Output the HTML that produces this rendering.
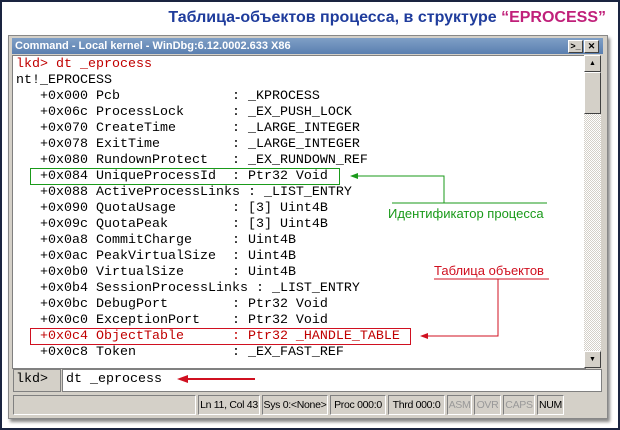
<!DOCTYPE html>
<html><head><meta charset="utf-8"><style>
body{margin:0;width:620px;height:430px;background:#fff;position:relative;overflow:hidden;font-family:"Liberation Sans",sans-serif}
.frame{position:absolute;left:0;top:0;width:616px;height:426px;border:2px solid #1a2440}
.title{position:absolute;right:14px;top:9px;font:bold 16px "Liberation Sans","DejaVu Sans",sans-serif;color:#1f3c9c}
.title span{color:#c0207a}
.win{position:absolute;left:8px;top:35px;width:598px;height:382px;background:#d4d0c8;border:1px solid #888;box-shadow:2px 3px 3px #888}
.tb{position:absolute;left:3px;top:2px;width:591px;height:16px;background:linear-gradient(#7f9fc6,#5a7fb0);color:#fff;font:bold 11px "Liberation Sans",sans-serif;line-height:16px;padding-left:3px;box-sizing:border-box}
.btn{position:absolute;top:2px;width:13px;height:11px;background:#d4d0c8;border:1px solid #fff;border-right-color:#404040;border-bottom-color:#404040;color:#000;font-size:9px;line-height:11px;text-align:center}
.out{position:absolute;left:3px;top:19px;width:572px;height:312px;background:#fff;border:1px solid #808080;overflow:hidden}
.sb{position:absolute;left:575px;top:19px;width:17px;height:313px;background:repeating-conic-gradient(#d4d0c8 0 25%,#fff 0 50%) 0 0/2px 2px}
.sbb{position:absolute;left:0;width:15px;height:15px;background:#d4d0c8;border:1px solid #fff;border-right-color:#404040;border-bottom-color:#404040;font-size:7px;text-align:center;line-height:15px}
pre{margin:0;position:absolute;left:3px;top:1px;font:13.33px/16px "Liberation Mono",monospace;color:#000}
.r{color:#c00000}
.in{position:absolute;left:4px;top:333px;width:589px;height:23px}
.pr{position:absolute;left:0;top:0;width:48px;border:1px solid #808080;font:13.33px/20px "Liberation Mono",monospace;padding-left:2px;box-sizing:border-box;height:23px}
.ed{position:absolute;left:49px;top:0;width:540px;height:23px;background:#fff;border:1px solid #808080;box-sizing:border-box;font:13.33px/20px "Liberation Mono",monospace;padding-left:3px}
.st{position:absolute;top:359px;height:20px;border:1px solid #808080;border-right-color:#fff;border-bottom-color:#fff;font:10.5px/18px "Liberation Sans",sans-serif;text-align:center;box-sizing:border-box;color:#000;white-space:nowrap;overflow:hidden;letter-spacing:-0.3px}
.g{color:#999}
</style></head><body>
<div class="frame"></div>
<div class="title">Таблица-объектов процесса, в структуре <span>“EPROCESS”</span></div>
<div class="win">
<div class="tb">Command - Local kernel - WinDbg:6.12.0002.633 X86
<div class="btn" style="left:556px">&gt;_</div><div class="btn" style="left:572px">✕</div></div>
<div class="out"><pre><span class="r">lkd&gt; dt _eprocess</span>
nt!_EPROCESS
   +0x000 Pcb              : _KPROCESS
   +0x06c ProcessLock      : _EX_PUSH_LOCK
   +0x070 CreateTime       : _LARGE_INTEGER
   +0x078 ExitTime         : _LARGE_INTEGER
   +0x080 RundownProtect   : _EX_RUNDOWN_REF
   +0x084 UniqueProcessId  : Ptr32 Void
   +0x088 ActiveProcessLinks : _LIST_ENTRY
   +0x090 QuotaUsage       : [3] Uint4B
   +0x09c QuotaPeak        : [3] Uint4B
   +0x0a8 CommitCharge     : Uint4B
   +0x0ac PeakVirtualSize  : Uint4B
   +0x0b0 VirtualSize      : Uint4B
   +0x0b4 SessionProcessLinks : _LIST_ENTRY
   +0x0bc DebugPort        : Ptr32 Void
   +0x0c0 ExceptionPort    : Ptr32 Void
<span class="r">   +0x0c4 ObjectTable      : Ptr32 _HANDLE_TABLE</span>
   +0x0c8 Token            : _EX_FAST_REF</pre></div>
<div class="sb"><div class="sbb" style="top:0">▲</div><div class="sbb" style="top:17px;height:40px"></div><div class="sbb" style="top:296px">▼</div></div>
<div class="in"><div class="pr">lkd&gt;</div><div class="ed">dt _eprocess</div></div>
<div class="st" style="left:4px;width:183px"></div>
<div class="st" style="left:189px;width:62px">Ln 11, Col 43</div>
<div class="st" style="left:253px;width:66px">Sys 0:&lt;None&gt;</div>
<div class="st" style="left:321px;width:56px">Proc 000:0</div>
<div class="st" style="left:379px;width:57px">Thrd 000:0</div>
<div class="st g" style="left:438px;width:25px">ASM</div>
<div class="st g" style="left:465px;width:27px">OVR</div>
<div class="st g" style="left:494px;width:32px">CAPS</div>
<div class="st" style="left:528px;width:27px">NUM</div>
</div>
<svg width="620" height="430" style="position:absolute;left:0;top:0">
<rect x="30.5" y="168.5" width="309" height="16" fill="none" stroke="#1a9a1a"/>
<rect x="30.5" y="328.5" width="380" height="16" fill="none" stroke="#d01020"/>
<g stroke="#1a9a1a" fill="none"><path d="M353 176H444V203M392 203H547"/></g>
<path d="M350 176l8-3v6z" fill="#1a9a1a"/>
<text x="388" y="218" font-family="Liberation Sans,DejaVu Sans,sans-serif" font-size="13" fill="#1a9a1a">Идентификатор процесса</text>
<text x="434" y="275" font-family="Liberation Sans,DejaVu Sans,sans-serif" font-size="13" fill="#d01020">Таблица объектов</text>
<g stroke="#d01020" fill="none"><path d="M434 279H549M498 279V336H424"/><path d="M186 379H255" stroke-width="2"/></g>
<path d="M420 336l8-3v6z" fill="#d01020"/>
<path d="M177 379l11-4v8z" fill="#d01020"/>
</svg>
</body></html>
